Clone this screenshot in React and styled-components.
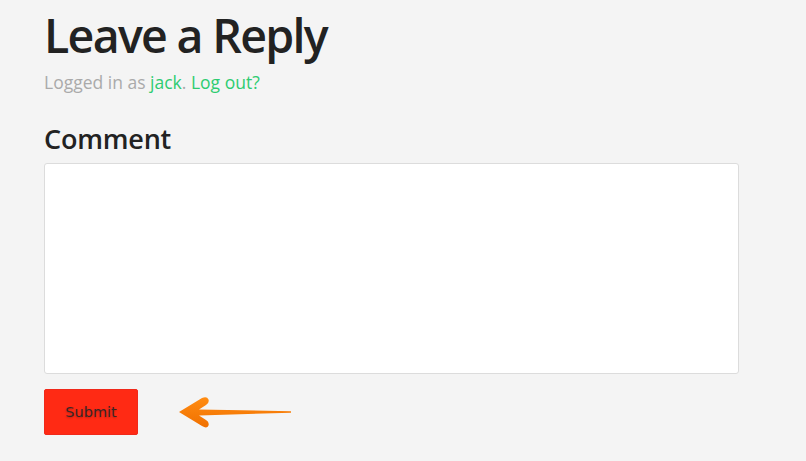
import React from "react";
import styled, { createGlobalStyle } from "styled-components";

const GlobalStyle = createGlobalStyle`
  html, body {
    margin: 0;
    padding: 0;
    background: #f4f4f4;
  }
  body {
    font-family: "Open Sans", "Noto Sans", sans-serif;
  }
`;

export default function App() {
  return (
    <>
      <GlobalStyle />
      <Page>
        <Title>Leave a Reply</Title>
        <LoggedIn>
          Logged in as <Link href="#">jack</Link>. <Link href="#">Log out?</Link>
        </LoggedIn>
        <Label htmlFor="comment">Comment</Label>
        <TextArea id="comment" />
        <Actions>
          <SubmitButton type="button">Submit</SubmitButton>
          <Arrow width="116" height="36" viewBox="0 0 116 36">
            <defs>
              <linearGradient id="arrowFill" x1="0" y1="0" x2="0" y2="1">
                <stop offset="0" stopColor="#ff8c12" />
                <stop offset="1" stopColor="#f07000" />
              </linearGradient>
            </defs>
            <path
              d="M2 18 L25 4 Q30 2 31.5 5.5 Q32.5 9 29 11 L22 15.5 L114 17.3 L114 18.7 L22 21.5 L29 26 Q32.5 28 31.5 31.5 Q30 35 25 32 Z"
              fill="url(#arrowFill)"
            />
          </Arrow>
        </Actions>
      </Page>
    </>
  );
}

const Page = styled.div`
  padding: 0 44px;
  width: 695px;
  display: flex;
  flex-direction: column;
`;

const Title = styled.h2`
  margin: 3px 0 0;
  font-size: 46.5px;
  font-weight: 600;
  line-height: 64px;
  letter-spacing: -1.7px;
  color: #222;
`;

const LoggedIn = styled.p`
  margin: 3px 0 0;
  font-size: 17.5px;
  line-height: 24px;
  color: #aaa;
`;

const Link = styled.a`
  color: #2ecc71;
  text-decoration: none;
`;

const Label = styled.label`
  margin-top: 29px;
  font-size: 27px;
  font-weight: 600;
  line-height: 32px;
  letter-spacing: -0.2px;
  color: #222;
`;

const TextArea = styled.textarea`
  margin-top: 8px;
  box-sizing: border-box;
  width: 695px;
  height: 211px;
  resize: none;
  background: #fff;
  border: 1px solid #dcdcdc;
  border-radius: 3px;
  outline: none;
`;

const Actions = styled.div`
  margin-top: 15px;
  display: flex;
  align-items: center;
  gap: 39px;
`;

const SubmitButton = styled.button`
  width: 94px;
  height: 46px;
  background: #ff2a14;
  border: 1px solid #f0291a;
  border-radius: 2px;
  color: #3a2626;
  font-family: "DejaVu Sans", Verdana, sans-serif;
  font-size: 14.5px;
  font-weight: 400;
  text-shadow: 0 1px 2px rgba(0, 0, 0, 0.25);
  cursor: pointer;
`;

const Arrow = styled.svg`
  display: block;
`;
